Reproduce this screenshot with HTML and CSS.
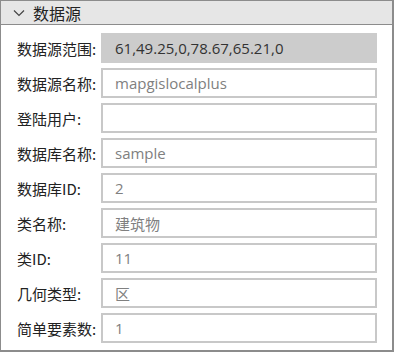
FILE: index.html
```html
<!DOCTYPE html>
<html>
<head>
<meta charset="utf-8">
<link rel="stylesheet" href="styles.css">
</head>
<body>
<div class="panel">
  <div class="header">
    <svg class="chev" width="12" height="8" viewBox="0 0 12 8"><polyline points="1,1.5 6,6.5 11,1.5" fill="none" stroke="#444" stroke-width="1.2"/></svg>
    <span class="title">数据源</span>
  </div>
  <div class="body">
    <div class="row"><span class="label">数据源范围:</span><div class="field disabled">61,49.25,0,78.67,65.21,0</div></div>
    <div class="row"><span class="label">数据源名称:</span><div class="field">mapgislocalplus</div></div>
    <div class="row"><span class="label">登陆用户:</span><div class="field"></div></div>
    <div class="row"><span class="label">数据库名称:</span><div class="field">sample</div></div>
    <div class="row"><span class="label">数据库ID:</span><div class="field">2</div></div>
    <div class="row"><span class="label">类名称:</span><div class="field">建筑物</div></div>
    <div class="row"><span class="label">类ID:</span><div class="field">11</div></div>
    <div class="row"><span class="label">几何类型:</span><div class="field">区</div></div>
    <div class="row"><span class="label">简单要素数:</span><div class="field">1</div></div>
  </div>
</div>
</body>
</html>
```
FILE: styles.css
```css
html, body {
  margin: 0;
  padding: 0;
  background: #fff;
}
body {
  font-family: "Open Sans", "Noto Sans CJK SC", sans-serif;
  font-size: 14px;
}
.panel {
  width: 394px;
  height: 352px;
  box-sizing: border-box;
  border: 1px solid #8c8c8c;
  border-right-width: 2px;
  border-bottom-width: 2px;
  background: #fff;
}
.header {
  height: 24px;
  box-sizing: border-box;
  background: #e6e6e6;
  border-bottom: 1px solid #8c8c8c;
  display: flex;
  align-items: center;
  padding-left: 12px;
}
.chev {
  margin-right: 8px;
}
.title {
  font-family: "Noto Sans CJK SC", sans-serif;
  font-size: 16px;
  color: #222;
  line-height: 1;
}
.body {
  padding: 8px 0 0 16px;
  display: flex;
  flex-direction: column;
  gap: 5px;
}
.row {
  display: flex;
  align-items: center;
  height: 30px;
}
.label {
  width: 84px;
  font-family: "Noto Sans CJK SC", sans-serif;
  font-size: 15px;
  color: #222;
  white-space: nowrap;
}
.field {
  width: 276px;
  height: 30px;
  box-sizing: border-box;
  border: 2px solid #c8c8c8;
  padding-left: 12px;
  display: flex;
  align-items: center;
  color: #808080;
  font-size: 15px;
}
.field.disabled {
  background: #cccccc;
  border-color: #cccccc;
  color: #333;
}
```
